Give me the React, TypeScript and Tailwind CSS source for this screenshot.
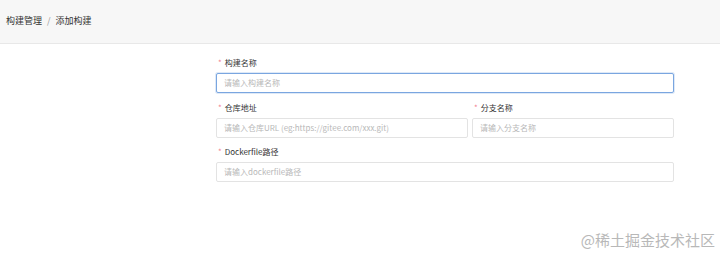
import React from "react";

const font = { fontFamily: '"Noto Sans CJK SC", "Noto Sans", sans-serif' };

function Label({ text }: { text: string }) {
  return (
    <div className="flex items-center h-[10px] leading-[10px] mb-[5px] text-[8px] text-[#333]">
      <span className="text-[#f3838f] mr-[3px] ml-[2px]">*</span>
      <span>{text}</span>
    </div>
  );
}

function Input({ placeholder, focus }: { placeholder: string; focus?: boolean }) {
  return (
    <div
      className={
        "h-[20px] rounded-[2px] bg-white flex items-center px-[7px] text-[8px] text-[#b8b8b8] border " +
        (focus
          ? "border-[#7aa6e0] shadow-[0_0_0_1px_rgba(122,166,224,0.25)]"
          : "border-[#e3e3e3]")
      }
    >
      {placeholder}
    </div>
  );
}

export default function App() {
  return (
    <div className="w-[720px] h-[255px] bg-white relative overflow-hidden" style={font}>
      <div className="h-[44px] bg-[#f7f7f7] border-b border-[#e8e8e8] flex items-center pl-[6px] pb-[2px] text-[9px] text-[#333]">
        <span>构建管理</span>
        <span className="mx-[5px] text-[#999]">/</span>
        <span>添加构建</span>
      </div>
      <div className="ml-[216px] w-[458px] pt-[14px]">
        <div>
          <Label text="构建名称" />
          <Input placeholder="请输入构建名称" focus />
        </div>
        <div className="mt-[10px] flex gap-[4px]">
          <div className="w-[252px]">
            <Label text="仓库地址" />
            <Input placeholder="请输入仓库URL (eg:https://gitee.com/xxx.git)" />
          </div>
          <div className="flex-1">
            <Label text="分支名称" />
            <Input placeholder="请输入分支名称" />
          </div>
        </div>
        <div className="mt-[9px]">
          <Label text="Dockerfile路径" />
          <Input placeholder="请输入dockerfile路径" />
        </div>
      </div>
      <div className="absolute right-[5px] bottom-[4px] text-[15px] text-[#b8b8b8]">
        @稀土掘金技术社区
      </div>
    </div>
  );
}
